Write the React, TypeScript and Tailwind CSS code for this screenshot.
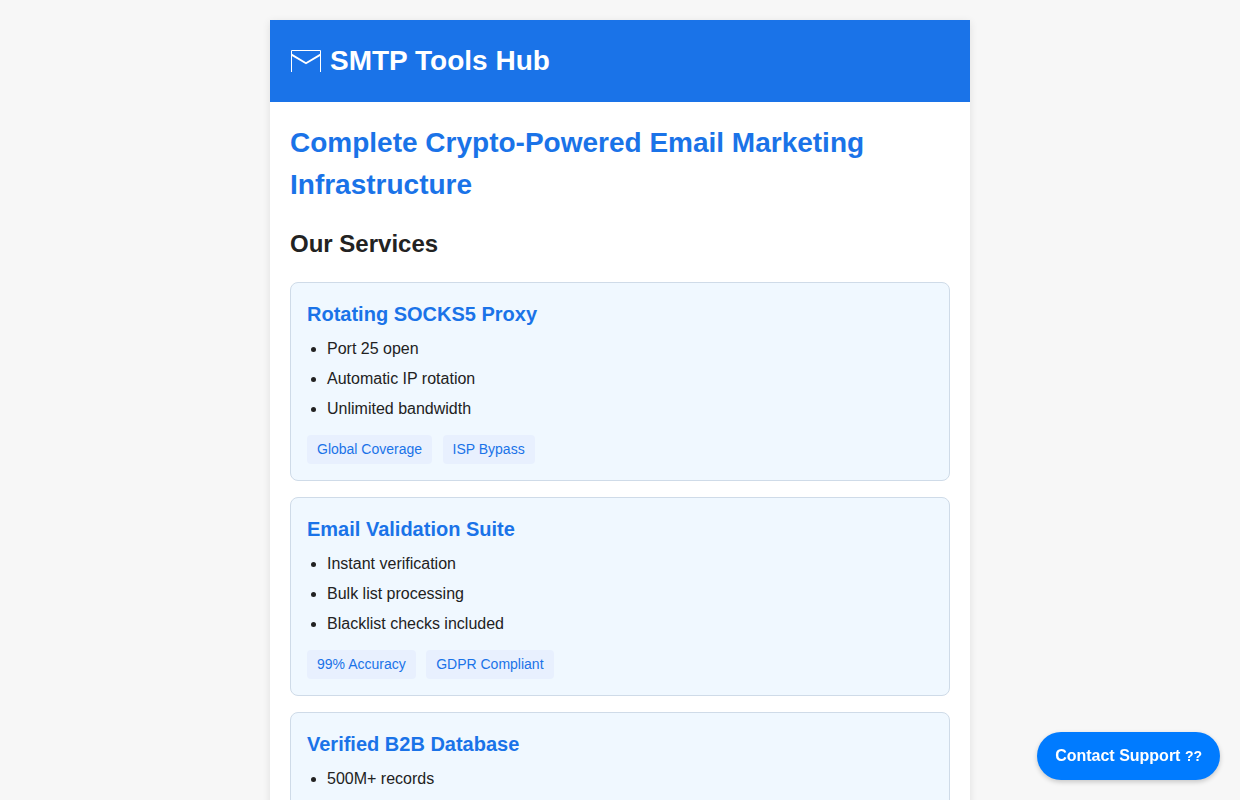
import React from 'react';

type Service = { title: string; features: string[]; tags: string[] };

const services: Service[] = [
  {
    title: 'Rotating SOCKS5 Proxy',
    features: ['Port 25 open', 'Automatic IP rotation', 'Unlimited bandwidth'],
    tags: ['Global Coverage', 'ISP Bypass'],
  },
  {
    title: 'Email Validation Suite',
    features: ['Instant verification', 'Bulk list processing', 'Blacklist checks included'],
    tags: ['99% Accuracy', 'GDPR Compliant'],
  },
  {
    title: 'Verified B2B Database',
    features: ['500M+ records'],
    tags: [],
  },
];

function EnvelopeIcon() {
  return (
    <svg viewBox="0 0 32 32" className="size-8 shrink-0" fill="none" stroke="#fff" aria-hidden="true">
      <path d="M1.5 27V5.5H30.5V27" strokeWidth="1" />
      <path d="M1.5 9.6L16 18.2L30.5 9.6" strokeWidth="1.9" />
    </svg>
  );
}

function ServiceCard({ title, features, tags }: Service) {
  return (
    <article className="rounded-lg border border-[#cfdbe8] bg-[#f0f8ff] p-4">
      <h3 className="mb-2 text-[20px] leading-[30px] font-bold text-[#1a73e8]">{title}</h3>
      <ul className="list-disc pl-5">
        {features.map((feature) => (
          <li key={feature} className="mb-1.5">
            {feature}
          </li>
        ))}
      </ul>
      {tags.length > 0 && (
        <div className="mt-2">
          {tags.map((tag) => (
            <React.Fragment key={tag}>
              <span className="mt-1.5 mr-1.5 inline-block rounded bg-[#e8f0fe] px-2.5 py-1 text-[14px] leading-[21px] text-[#1a73e8]">
                {tag}
              </span>{' '}
            </React.Fragment>
          ))}
        </div>
      )}
    </article>
  );
}

export default function App() {
  return (
    <div className="min-h-screen bg-[#f7f7f7] px-5 pt-5 font-['Liberation_Sans',Arial,sans-serif] text-[16px] leading-6 text-[#222]">
      <div className="mx-auto max-w-[700px] bg-white shadow-[0_2px_8px_rgba(0,0,0,0.1)]">
        <header className="flex items-center gap-2 bg-[#1a73e8] p-5 text-white">
          <EnvelopeIcon />
          <h1 className="text-[28px] leading-[42px] font-bold">SMTP Tools Hub</h1>
        </header>
        <main className="p-5">
          <h2 className="mb-5 text-[28px] leading-[42px] font-bold text-[#1a73e8]">
            Complete Crypto-Powered Email Marketing Infrastructure
          </h2>
          <h2 className="mb-5 text-[24px] leading-9 font-bold">Our Services</h2>
          <div className="flex flex-col gap-4">
            {services.map((service) => (
              <ServiceCard key={service.title} {...service} />
            ))}
          </div>
        </main>
      </div>
      <button
        type="button"
        className="fixed right-5 bottom-5 cursor-pointer rounded-full bg-[#007bff] px-[18px] py-3 font-bold text-white shadow-[0_2px_5px_rgba(0,0,0,0.2)]"
      >
        Contact Support <span className="text-[14px]">??</span>
      </button>
    </div>
  );
}
